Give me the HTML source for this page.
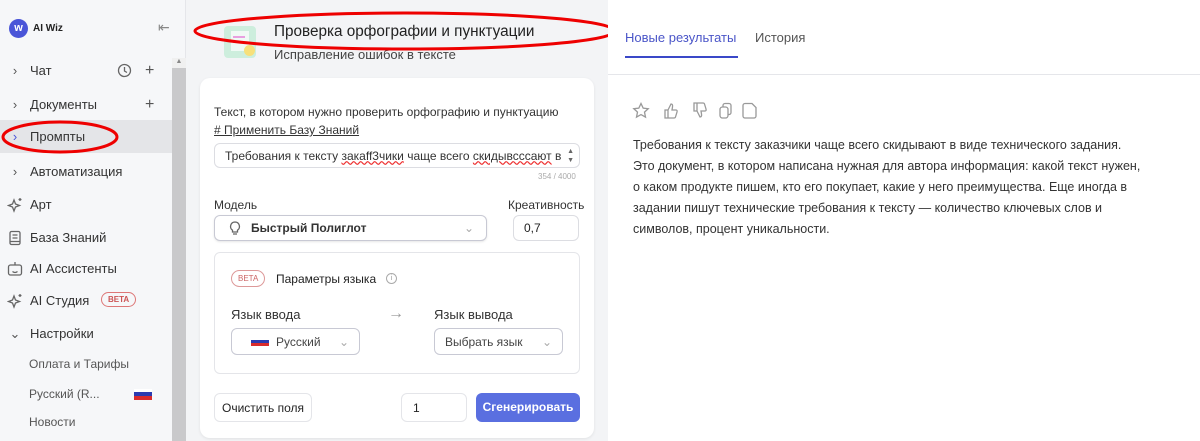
<!DOCTYPE html>
<html><head><meta charset="utf-8"><style>
*{box-sizing:border-box;margin:0;padding:0}
body{width:1200px;height:441px;overflow:hidden;font-family:"Liberation Sans","Noto Sans CJK SC",sans-serif;background:#f3f4f6;position:relative;color:#222}
.abs{position:absolute}
.side{left:0;top:0;width:186px;height:441px;background:#f6f7f9;border-right:1px solid #e5e6ea}
.nav{position:absolute;left:0;width:172px;height:33px;font-size:13px;color:#333;display:flex;align-items:center}
.nav .ch{width:30px;display:flex;justify-content:center;font-size:13px;color:#555}
.sub{position:absolute;left:29px;font-size:12px;color:#555}
.mid{left:186px;top:0;width:422px;height:441px;background:#f3f4f6}
.card{left:200px;top:78px;width:394px;height:360px;background:#fff;border-radius:10px;box-shadow:0 1px 3px rgba(0,0,0,.08)}
.box{position:absolute;border:1px solid #dcdde2;border-radius:6px;background:#fff;font-size:12px;display:flex;align-items:center;white-space:pre}
.right{left:608px;top:0;width:592px;height:441px;background:#fff}
svg.i{fill:none;stroke:#666;stroke-width:1.3}
</style></head><body>
<div class="abs side">
  <div class="abs" style="left:9px;top:19px;width:19px;height:19px;border-radius:50%;background:#4a55d8;color:#fff;font-size:11px;font-weight:bold;text-align:center;line-height:19px">w</div>
  <div class="abs" style="left:33px;top:23px;font-size:10px;font-weight:bold;color:#222">AI Wiz</div>
  <div class="abs" style="left:158px;top:19px;font-size:14px;color:#888">⇤</div>
  <div class="abs" style="left:172px;top:58px;width:14px;height:383px;background:#c9c9cb"></div>
  <div class="abs" style="left:172px;top:58px;width:14px;height:10px;background:#f0f0f0;font-size:7px;text-align:center;color:#888">▲</div>
  <div class="nav" style="top:54px"><span class="ch">›</span>Чат<svg class="i abs" style="left:117px;top:9px" width="15" height="15"><circle cx="7.5" cy="7.5" r="6"/><path d="M7.5 4v4l2.5 1.5"/></svg><span style="position:absolute;left:145px;font-size:16px;color:#555">+</span></div>
  <div class="nav" style="top:88px"><span class="ch">›</span>Документы<span style="position:absolute;left:145px;font-size:16px;color:#555">+</span></div>
  <div class="nav" style="top:120px;background:#e4e5e8"><span class="ch" style="color:#4a55d8">›</span>Промпты</div>
  <div class="nav" style="top:155px"><span class="ch">›</span>Автоматизация</div>
  <div class="nav" style="top:188px"><span class="ch"><svg class="i" width="16" height="16"><path d="M7 3l1.5 4 4 1.5-4 1.5L7 14l-1.5-4-4-1.5 4-1.5z"/><path d="M13 1v3M11.5 2.5h3"/></svg></span>Арт</div>
  <div class="nav" style="top:221px"><span class="ch"><svg class="i" width="14" height="16"><rect x="2" y="1.5" width="10" height="13" rx="1.5"/><path d="M4.5 5h5M4.5 8h5M2 11.5h10"/></svg></span>База Знаний</div>
  <div class="nav" style="top:252px"><span class="ch"><svg class="i" width="16" height="16"><rect x="1.5" y="4" width="13" height="10" rx="2"/><path d="M8 1v3M5.5 10.5q2.5 2 5 0"/></svg></span>AI Ассистенты</div>
  <div class="nav" style="top:284px"><span class="ch"><svg class="i" width="16" height="16"><path d="M7 3l1.5 4 4 1.5-4 1.5L7 14l-1.5-4-4-1.5 4-1.5z"/><path d="M13 1v3M11.5 2.5h3"/></svg></span>AI Студия<span style="position:absolute;left:101px;top:8px;border:1px solid #d77;border-radius:9px;color:#c55;font-size:8px;padding:2px 6px;font-weight:bold">BETA</span></div>
  <div class="nav" style="top:317px"><span class="ch">⌄</span>Настройки</div>
  <div class="sub" style="top:357px">Оплата и Тарифы</div>
  <div class="sub" style="top:387px">Русский (R...</div>
  <div class="abs" style="left:134px;top:389px;width:18px;height:4px;background:#fff"></div>
  <div class="abs" style="left:134px;top:392px;width:18px;height:4px;background:#2b3bb0"></div>
  <div class="abs" style="left:134px;top:396px;width:18px;height:4px;background:#d92b2b"></div>
  <div class="sub" style="top:415px">Новости</div>
</div>
<svg class="abs" style="left:0;top:118px" width="125" height="38"><ellipse cx="60" cy="19" rx="57" ry="15" fill="none" stroke="#e00" stroke-width="3"/></svg>
<div class="abs mid"></div>
<div class="abs" style="left:224px;top:26px;width:32px;height:32px;background:#cdeedd;border-radius:4px"></div>
<div class="abs" style="left:231px;top:31px;width:18px;height:20px;background:#fff;opacity:.7"></div>
<div class="abs" style="left:233px;top:36px;width:12px;height:2px;background:#e8a0e0"></div>
<div class="abs" style="left:233px;top:41px;width:10px;height:2px;background:#e8a0e0"></div>
<div class="abs" style="left:244px;top:45px;width:11px;height:11px;border-radius:50%;background:#f7e07a"></div>
<div class="abs" style="left:274px;top:23px;font-size:15.3px;color:#222">Проверка орфографии и пунктуации</div>
<div class="abs" style="left:274px;top:47px;font-size:13px;color:#444">Исправление ошибок в тексте</div>
<svg class="abs" style="left:190px;top:8px" width="430" height="46"><ellipse cx="215" cy="23" rx="210" ry="18" fill="none" stroke="#e00" stroke-width="3"/></svg>
<div class="abs card"></div>
<div class="abs" style="left:214px;top:105px;font-size:12px;color:#333">Текст, в котором нужно проверить орфографию и пунктуацию</div>
<div class="abs" style="left:214px;top:123px;font-size:12px;color:#333;text-decoration:underline">#&nbsp;Применить Базу Знаний</div>
<div class="box" style="left:214px;top:143px;width:366px;height:25px;padding-left:10px;font-size:12px;color:#333">Требования к тексту <span style="text-decoration:underline wavy #e33">закаff3чики</span> чаще всего <span style="text-decoration:underline wavy #e33">скидывсссают</span> в<span style="position:absolute;right:5px;top:3px;font-size:7px;color:#666;line-height:9px">▲<br>▼</span></div>
<div class="abs" style="left:538px;top:172px;font-size:8px;color:#aaa">354 / 4000</div>
<div class="abs" style="left:214px;top:198px;font-size:12px;color:#333">Модель</div>
<div class="abs" style="left:508px;top:198px;font-size:12px;color:#333">Креативность</div>
<div class="box" style="left:214px;top:215px;width:273px;height:26px;border-color:#c8c9d4;box-shadow:0 1px 2px rgba(0,0,0,.1);font-weight:bold;color:#333"><svg class="i" style="margin:0 10px 0 14px" width="12" height="14"><path d="M6 1a4.5 4.5 0 0 0-2.5 8.2V11h5V9.2A4.5 4.5 0 0 0 6 1zM4 13h4"/></svg>Быстрый Полиглот<span style="position:absolute;right:12px;color:#aaa;font-weight:normal">⌄</span></div>
<div class="box" style="left:513px;top:215px;width:66px;height:26px;padding-left:10px">0,7</div>
<div class="abs" style="left:214px;top:252px;width:366px;height:122px;border:1px solid #e4e5e9;border-radius:6px"></div>
<div class="abs" style="left:231px;top:270px;border:1px solid #d99;border-radius:9px;color:#c66;font-size:8px;padding:3px 6px">BETA</div>
<div class="abs" style="left:276px;top:272px;font-size:12px;color:#222">Параметры языка</div>
<div class="abs" style="left:386px;top:273px;width:11px;height:11px;border:1px solid #aaa;border-radius:50%;font-size:7px;color:#999;text-align:center;line-height:10px">i</div>
<div class="abs" style="left:231px;top:307px;font-size:13px;color:#333">Язык ввода</div>
<div class="abs" style="left:388px;top:305px;font-size:16px;color:#999">→</div>
<div class="abs" style="left:434px;top:307px;font-size:13px;color:#333">Язык вывода</div>
<div class="box" style="left:231px;top:328px;width:129px;height:27px;border-color:#c8c9d4;padding-left:19px;color:#444"><span style="width:18px;height:9px;background:linear-gradient(#fff 0 33%,#2b3bb0 33% 66%,#d92b2b 66%);margin-right:7px;display:inline-block"></span>Русский<span style="position:absolute;right:10px;color:#aaa">⌄</span></div>
<div class="box" style="left:434px;top:328px;width:129px;height:27px;border-color:#c8c9d4;padding-left:10px;color:#444">Выбрать язык<span style="position:absolute;right:10px;color:#aaa">⌄</span></div>
<div class="box" style="left:214px;top:393px;width:98px;height:29px;justify-content:center;border-color:#e4e5e9;color:#222">Очистить поля</div>
<div class="box" style="left:401px;top:393px;width:66px;height:29px;padding-left:11px;border-color:#e4e5e9">1</div>
<div class="abs" style="left:476px;top:393px;width:104px;height:29px;background:#5a6fe0;border-radius:6px;color:#fff;font-size:12px;font-weight:bold;text-align:center;line-height:29px">Сгенерировать</div>
<div class="abs right"></div>
<div class="abs" style="left:608px;top:74px;width:592px;height:1px;background:#e5e6ea"></div>
<div class="abs" style="left:625px;top:30px;font-size:13px;color:#4a55c8">Новые результаты</div>
<div class="abs" style="left:625px;top:56px;width:113px;height:2px;background:#3a48c8"></div>
<div class="abs" style="left:755px;top:30px;font-size:13px;color:#555">История</div>
<svg class="abs i" style="left:632px;top:102px;stroke:#999" width="140" height="18">
<path d="M9 1.5l2.2 4.6 5 .6-3.7 3.4 1 5-4.5-2.5-4.5 2.5 1-5L1.8 6.7l5-.6z"/>
<path d="M33 8h3v8h-3zM36 8l3-6q2 0 1.5 3L40 8h4q1.5 0 1 2l-1.5 5q-.3 1-1.5 1H36"/>
<path d="M62 9h3V1h-3zM65 9l3 6q2 0 1.5-3L69 9h4q1.5 0 1-2l-1.5-5q-.3-1-1.5-1H65"/>
<rect x="88" y="5" width="8" height="11" rx="2.5"/><path d="M91 5V3.5A2 2 0 0 1 93 1.5h4a2 2 0 0 1 2 2v7a2 2 0 0 1-2 2h-1"/>
<path d="M113 1.5h7l4 4v8.5a2 2 0 0 1-2 2h-9a2 2 0 0 1-2-2v-10.5a2 2 0 0 1 2-2z"/>
</svg>
<div class="abs" style="left:633px;top:135px;white-space:nowrap;font-size:12.5px;line-height:21px;color:#333">Требования к тексту заказчики чаще всего скидывают в виде технического задания.<br>Это документ, в котором написана нужная для автора информация: какой текст нужен,<br>о каком продукте пишем, кто его покупает, какие у него преимущества. Еще иногда в<br>задании пишут технические требования к тексту — количество ключевых слов и<br>символов, процент уникальности.</div>
</body></html>
